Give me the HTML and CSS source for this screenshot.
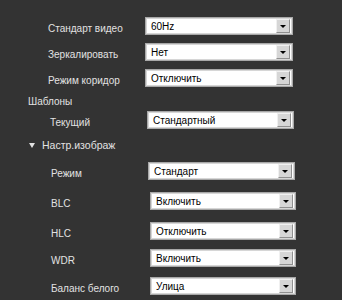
FILE: index.html
```html
<!DOCTYPE html>
<html>
<head>
<meta charset="utf-8">
<link rel="stylesheet" href="styles.css">
</head>
<body>
<div class="panel">
  <div class="row r1"><span class="label">Стандарт видео</span><div class="sel w148"><span class="val">60Hz</span><span class="btn"></span></div></div>
  <div class="row r2"><span class="label">Зеркалировать</span><div class="sel w148"><span class="val">Нет</span><span class="btn"></span></div></div>
  <div class="row r3"><span class="label">Режим коридор</span><div class="sel w148"><span class="val">Отключить</span><span class="btn"></span></div></div>
  <div class="section s-tpl">Шаблоны</div>
  <div class="row r4"><span class="label l2">Текущий</span><div class="sel w147"><span class="val">Стандартный</span><span class="btn"></span></div></div>
  <div class="section s-img"><span class="tri"></span>Настр.изображ</div>
  <div class="row r5"><span class="label l3">Режим</span><div class="sel w147"><span class="val">Стандарт</span><span class="btn"></span></div></div>
  <div class="row r6"><span class="label l4">BLC</span><div class="sel w146"><span class="val">Включить</span><span class="btn"></span></div></div>
  <div class="row r7"><span class="label l4">HLC</span><div class="sel w146"><span class="val">Отключить</span><span class="btn"></span></div></div>
  <div class="row r8"><span class="label l4">WDR</span><div class="sel w146"><span class="val">Включить</span><span class="btn"></span></div></div>
  <div class="row r9"><span class="label l4">Баланс белого</span><div class="sel w146"><span class="val">Улица</span><span class="btn"></span></div></div>
</div>
</body>
</html>
```
FILE: styles.css
```css
html, body {
  margin: 0;
  padding: 0;
  background: #333333;
  height: 100%;
  overflow: hidden;
}
.panel {
  display: flex;
  flex-direction: column;
  padding-top: 17px;
  font-family: "Liberation Sans", Arial, sans-serif;
  font-size: 10px;
  color: #e2e2e2;
}
.row {
  display: flex;
  align-items: center;
  height: 18px;
}
.label {
  box-sizing: border-box;
  padding-left: 48px;
  width: 145px;
  flex: none;
  position: relative;
  top: 2px;
}
.label.l2 { padding-left: 50px; width: 147px; }
.label.l3 { padding-left: 51px; width: 148px; }
.label.l4 { padding-left: 51px; width: 150px; }
.r2, .r3 { margin-top: 8px; }
.section {
  height: 14px;
  line-height: 14px;
  padding-left: 28px;
  display: flex;
  align-items: center;
}
.s-tpl { margin-top: 8px; }
.r4 { margin-top: 2px; }
.s-img { margin-top: 9px; padding-left: 29px; font-size: 10.5px; }
.tri {
  width: 0;
  height: 0;
  border-left: 3.5px solid transparent;
  border-right: 3.5px solid transparent;
  border-top: 5px solid #e2e2e2;
  margin-right: 7px;
}
.r5 { margin-top: 10px; }
.r6 { margin-top: 12px; }
.r7 { margin-top: 12px; }
.r8 { margin-top: 9px; }
.r9 { margin-top: 10px; }
.sel {
  box-sizing: border-box;
  height: 18px;
  background: #ffffff;
  border: 1px solid #a8a8a8;
  box-shadow: inset 0 0 0 1px #d6d6d6;
  display: flex;
  align-items: center;
  justify-content: space-between;
  padding: 2px 2px 2px 5px;
  color: #000;
}
.w148 { width: 148px; }
.w147 { width: 147px; }
.w146 { width: 146px; }
.val { line-height: 13px; }
.btn {
  box-sizing: border-box;
  width: 14px;
  height: 14px;
  background: #d6d6d6;
  border: 1px solid #f0f0f0;
  border-right-color: #909090;
  border-bottom-color: #909090;
  display: flex;
  align-items: center;
  justify-content: center;
}
.btn::after {
  content: "";
  width: 0;
  height: 0;
  border-left: 3px solid transparent;
  border-right: 3px solid transparent;
  border-top: 3px solid #000;
}
```
